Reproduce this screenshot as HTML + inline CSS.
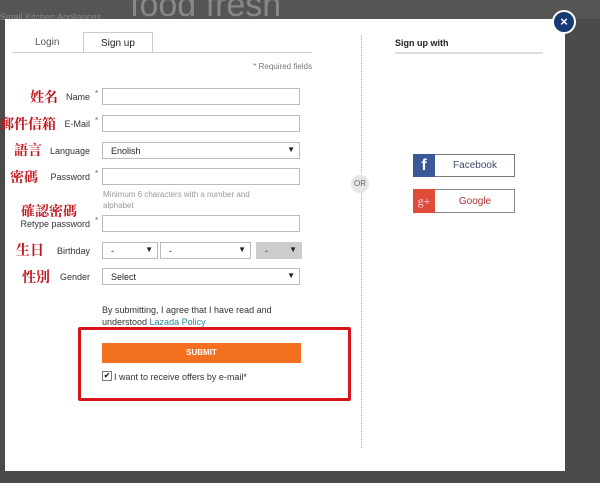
<!DOCTYPE html>
<html><head><meta charset="utf-8"><style>
body{margin:0;width:600px;height:483px;overflow:hidden;background:#4b4b4b;font-family:"Liberation Sans","Noto Sans CJK TC",sans-serif;position:relative}
.a{position:absolute}
.m{left:5px;top:19px;width:560px;height:452px;background:#fff}
.lbl{font-size:9px;color:#333;text-align:right;width:90px;left:0}
.cj{color:#c0161e;font-size:14px;font-family:"Noto Serif CJK SC","Noto Sans CJK TC",serif;font-weight:bold}
.in{left:102px;width:198px;height:17px;border:1px solid #bbb;background:#fff;font-size:9px;color:#222;box-sizing:border-box;padding:3px 8px}
.ar{position:absolute;right:4px;top:2px;font-size:8px}
.st{font-size:8px;color:#666}
</style></head><body>
<div class="a" style="left:0;top:0;width:600px;height:19px;background:#555"></div>
<div class="a" style="left:0;top:12px;font-size:9px;color:#888">Small Kitchen Appliances</div>
<div class="a" style="left:130px;top:-14px;font-size:34px;color:#888">food fresh</div>
<div class="a m"></div>
<div class="a" style="left:35px;top:37px;font-size:10px;color:#555">Login</div>
<div class="a" style="left:83px;top:32px;width:68px;height:20px;border:1px solid #ccc;border-bottom:none;background:#fff"></div>
<div class="a" style="left:101px;top:38px;font-size:10px;color:#222">Sign up</div>
<div class="a" style="left:12px;top:52px;width:300px;height:1px;background:#ccc"></div>
<div class="a" style="left:200px;top:62px;width:112px;text-align:right;font-size:8px;color:#777">* Required fields</div>

<div class="a cj" style="left:30px;top:87px">姓名</div><div class="a lbl" style="top:92px">Name</div><div class="a st" style="left:95px;top:89px">*</div><div class="a in" style="top:88px"></div>
<div class="a cj" style="left:0;top:114px">郵件信箱</div><div class="a lbl" style="top:119px">E-Mail</div><div class="a st" style="left:95px;top:116px">*</div><div class="a in" style="top:115px"></div>
<div class="a cj" style="left:14px;top:140px">語言</div><div class="a lbl" style="top:146px">Language</div><div class="a in" style="top:142px">Enolish<span class="ar">▼</span></div>
<div class="a cj" style="left:10px;top:167px">密碼</div><div class="a lbl" style="top:172px">Password</div><div class="a st" style="left:95px;top:169px">*</div><div class="a in" style="top:168px"></div>
<div class="a" style="left:103px;top:189px;font-size:8px;color:#999;line-height:11px;width:172px">Minimum 6 characters with a number and alphabet</div>
<div class="a cj" style="left:21px;top:201px">確認密碼</div><div class="a lbl" style="top:219px">Retype password</div><div class="a st" style="left:95px;top:216px">*</div><div class="a in" style="top:215px"></div>
<div class="a cj" style="left:16px;top:240px">生日</div><div class="a lbl" style="top:246px">Birthday</div>
<div class="a in" style="top:242px;width:56px">-<span class="ar">▼</span></div>
<div class="a in" style="top:242px;left:160px;width:91px">-<span class="ar">▼</span></div>
<div class="a in" style="top:242px;left:256px;width:46px;background:#ccc;border-color:#ccc">-<span class="ar">▼</span></div>
<div class="a cj" style="left:22px;top:267px">性別</div><div class="a lbl" style="top:272px">Gender</div><div class="a in" style="top:268px">Select<span class="ar">▼</span></div>
<div class="a" style="left:102px;top:304px;font-size:9px;color:#333;line-height:12px">By submitting, I agree that I have read and<br>understood <span style="color:#2a8a9a">Lazada Policy</span></div>
<div class="a" style="left:78px;top:327px;width:267px;height:68px;border:3px solid #d8141a;border-radius:2px"></div>
<div class="a" style="left:102px;top:343px;width:199px;height:20px;background:#f37021;color:#fff;font-size:8px;font-weight:bold;text-align:center;line-height:20px">SUBMIT</div>
<div class="a" style="left:102px;top:371px;width:8px;height:8px;border:1px solid #777;font-size:8px;line-height:8px;text-align:center">✔</div>
<div class="a" style="left:114px;top:372px;font-size:9px;color:#333">I want to receive offers by e-mail*</div>

<div class="a" style="left:361px;top:35px;height:413px;border-left:1px dotted #aaa"></div>
<div class="a" style="left:351px;top:175px;width:18px;height:18px;border-radius:50%;background:#e6e6e6;font-size:8px;color:#666;text-align:center;line-height:18px">OR</div>
<div class="a" style="left:395px;top:38px;font-size:9px;color:#222;font-weight:bold">Sign up with</div>
<div class="a" style="left:395px;top:52px;width:148px;height:2px;background:#ddd"></div>
<div class="a" style="left:413px;top:154px;width:102px;height:23px;border:1px solid #777;box-sizing:border-box"></div>
<div class="a" style="left:413px;top:154px;width:22px;height:23px;background:#3b5998;color:#fff;font-weight:bold;font-size:16px;text-align:center;line-height:24px">f</div>
<div class="a" style="left:440px;top:160px;width:70px;text-align:center;font-size:10px;color:#3b4a6b">Facebook</div>
<div class="a" style="left:413px;top:189px;width:102px;height:24px;border:1px solid #888;box-sizing:border-box"></div>
<div class="a" style="left:413px;top:189px;width:22px;height:24px;background:#dd4b39;color:#fde;font-size:12px;font-family:'Liberation Serif',serif;text-align:center;line-height:24px">g+</div>
<div class="a" style="left:440px;top:196px;width:70px;text-align:center;font-size:10px;color:#a33">Google</div>

<div class="a" style="left:552px;top:10px;width:20px;height:20px;border-radius:50%;background:#163a73;border:2px solid #fff;color:#fff;font-weight:bold;font-size:13px;text-align:center;line-height:20px">×</div>
</body></html>
